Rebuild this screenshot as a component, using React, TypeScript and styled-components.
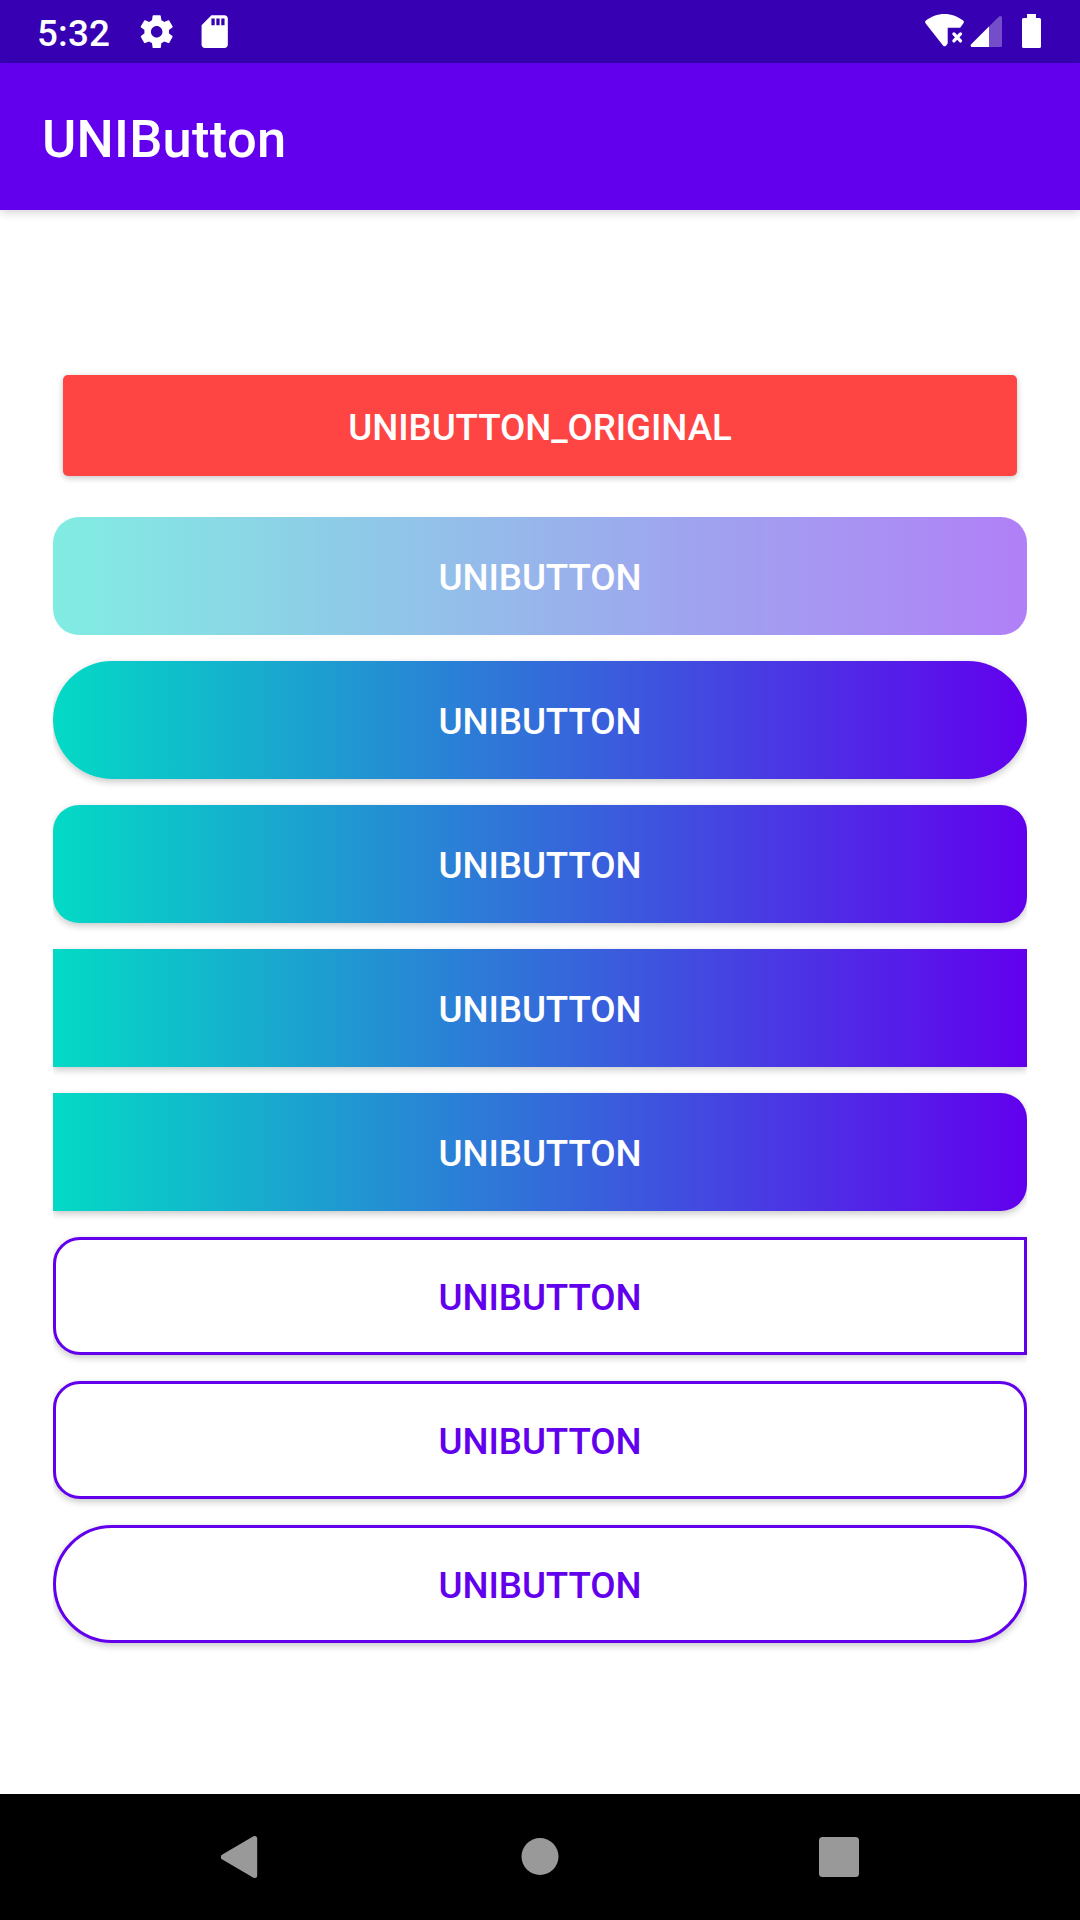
import React from "react";
import styled, { createGlobalStyle, css } from "styled-components";

const GlobalStyle = createGlobalStyle`
  *, *::before, *::after { box-sizing: border-box; }
  body { margin: 0; background: #fff; }
`;

const Screen = styled.div`
  display: flex;
  flex-direction: column;
  width: 1080px;
  height: 1920px;
  background: #fff;
  font-family: Roboto, "Noto Sans", sans-serif;
  overflow: hidden;
`;

const StatusBar = styled.header`
  display: flex;
  align-items: center;
  height: 63px;
  padding: 0 37px;
  background: #3700b3;
  color: #fff;
`;

const Clock = styled.time`
  width: 100px;
  padding-top: 3px;
  font-size: 36.75px;
  font-weight: 500;
  letter-spacing: 0.2px;
  line-height: 43px;
`;

const Notifications = styled.div`
  display: flex;
  flex: 1;
  gap: 18.6px;
`;

const SystemIcons = styled.div`
  display: flex;
  align-items: center;
`;

const AppBar = styled.div`
  display: flex;
  align-items: center;
  height: 147px;
  padding: 5px 42px 0;
  background: #6200ee;
  box-shadow: 0 3px 9px rgba(0, 0, 0, 0.14), 0 0 12px rgba(0, 0, 0, 0.04);
`;

const Title = styled.h1`
  margin: 0;
  color: #fff;
  font-size: 52.5px;
  font-weight: 500;
  letter-spacing: 0.25px;
  line-height: 62px;
`;

const Content = styled.main`
  display: flex;
  flex: 1;
  flex-direction: column;
  gap: 26px;
  padding: 165px 53px 0;
`;

const buttonText = css`
  border: 0;
  font-family: inherit;
  font-size: 36.75px;
  font-weight: 500;
  letter-spacing: -0.1px;
  line-height: 43px;
  text-align: center;
`;

const OriginalButton = styled.button`
  ${buttonText}
  height: 101px;
  margin: 0 10px 15px;
  padding: 4px 0 0;
  border-radius: 5px;
  background: #ff4444;
  color: #fff;
  box-shadow: 0 2px 6px rgba(0, 0, 0, 0.18), 0 1px 10px rgba(0, 0, 0, 0.06);
`;

const UniButton = styled.button<{ $radius: string; $outlined?: boolean }>`
  ${buttonText}
  height: 118px;
  padding: 2px 0 0;
  border-radius: ${(p) => p.$radius};
  background: linear-gradient(90deg, #03dac5, #6200ee);
  color: #fff;
  box-shadow: 0 3px 7px rgba(0, 0, 0, 0.17), 0 2px 10px rgba(0, 0, 0, 0.06);
  clip-path: inset(-20px 0);

  ${(p) =>
    p.$outlined &&
    css`
      border: 3px solid #6200ee;
      background: #fff;
      color: #6200ee;
    `}

  &:disabled {
    opacity: 0.5;
    box-shadow: none;
  }
`;

const NavBar = styled.nav`
  display: flex;
  justify-content: center;
  height: 126px;
  padding-right: 1px;
  background: #000;
`;

const NavButton = styled.button`
  display: flex;
  align-items: center;
  justify-content: center;
  width: 299px;
  padding: 0;
  border: 0;
  background: none;
`;

interface ButtonSpec {
  radius: string;
  outlined?: boolean;
  disabled?: boolean;
}

const buttons: ButtonSpec[] = [
  { radius: "26px", disabled: true },
  { radius: "59px" },
  { radius: "26px" },
  { radius: "0" },
  { radius: "0 26px 26px 0" },
  { radius: "27px 0 0 27px", outlined: true },
  { radius: "27px", outlined: true },
  { radius: "59px", outlined: true },
];

const GearIcon = () => (
  <svg width="39.4" height="39.4" viewBox="0 0 24 24" fill="#fff">
    <path d="M19.43 12.98c.04-.32.07-.64.07-.98s-.03-.66-.07-.98l2.11-1.65c.19-.15.24-.42.12-.64l-2-3.46c-.12-.22-.39-.3-.61-.22l-2.49 1c-.52-.4-1.08-.73-1.69-.98l-.38-2.65C14.46 2.18 14.25 2 14 2h-4c-.25 0-.46.18-.49.42l-.38 2.65c-.61.25-1.17.59-1.69.98l-2.49-1c-.23-.09-.49 0-.61.22l-2 3.46c-.13.22-.07.49.12.64l2.11 1.65c-.04.32-.07.65-.07.98s.03.66.07.98l-2.11 1.65c-.19.15-.24.42-.12.64l2 3.46c.12.22.39.3.61.22l2.49-1c.52.4 1.08.73 1.69.98l.38 2.65c.03.24.24.42.49.42h4c.25 0 .46-.18.49-.42l.38-2.65c.61-.25 1.17-.59 1.69-.98l2.49 1c.23.09.49 0 .61-.22l2-3.46c.12-.22.07-.49-.12-.64l-2.11-1.65zM12 15.5c-1.93 0-3.5-1.57-3.5-3.5s1.57-3.5 3.5-3.5 3.5 1.57 3.5 3.5-1.57 3.5-3.5 3.5z" />
  </svg>
);

const SdCardIcon = () => (
  <svg width="39.4" height="39.4" viewBox="0 0 24 24" fill="#fff">
    <path d="M18 2h-8L4.02 8 4 20c0 1.1.9 2 2 2h12c1.1 0 2-.9 2-2V4c0-1.1-.9-2-2-2zm-6 6h-2V4h2v4zm3 0h-2V4h2v4zm3 0h-2V4h2v4z" />
  </svg>
);

const WifiOffIcon = () => (
  <svg width="44" height="39" viewBox="0 0 44 39">
    <path
      d="M1.600 8.800C7 4.500 13.500 2 20.500 2S34 4.500 39.400 8.800Q40.400 9.800 39.600 11L36.200 15.800H23.700V31.500L22 33.700Q20.600 35 19.200 33.700L1.500 11.200Q.6 9.800 1.600 8.800Z"
      fill="#fff"
    />
    <path d="M29.900 21.900l6.600 7m0-7l-6.600 7" stroke="#fff" strokeWidth="3.300" strokeLinecap="round" />
  </svg>
);

const SignalIcon = () => (
  <svg width="36" height="39" viewBox="0 0 36 39">
    <path d="M3 32.500L31 4.500Q33 3.200 34 5.200V33.500Q34 35 32.500 35H4Q2 34.500 3 32.500Z" fill="#fff" fillOpacity=".3" />
    <path d="M21 14.500V35H4Q2 34.500 3 32.500Z" fill="#fff" />
  </svg>
);

const BatteryIcon = () => (
  <svg width="39" height="39" viewBox="0 0 39 39">
    <path d="M23 2h9v4h3.400q1.600 0 1.600 1.600v26.800q0 1.600-1.600 1.600H19.600q-1.600 0-1.600-1.600V7.600Q18 6 19.600 6H23Z" fill="#fff" />
  </svg>
);

const BackIcon = () => (
  <svg width="40" height="44" viewBox="0 0 40 44">
    <path d="M2.200 22L33.700 3.500V40.500Z" fill="#999" stroke="#999" strokeWidth="5" strokeLinejoin="round" />
  </svg>
);

const HomeIcon = () => (
  <svg width="38" height="38" viewBox="0 0 38 38">
    <circle cx="19" cy="18.500" r="18.500" fill="#999" />
  </svg>
);

const RecentsIcon = () => (
  <svg width="40" height="40" viewBox="0 0 40 40">
    <rect width="40" height="40" rx="3.500" fill="#999" />
  </svg>
);

export default function App() {
  return (
    <Screen>
      <GlobalStyle />
      <StatusBar>
        <Clock>5:32</Clock>
        <Notifications>
          <GearIcon />
          <SdCardIcon />
        </Notifications>
        <SystemIcons>
          <WifiOffIcon />
          <SignalIcon />
          <BatteryIcon />
        </SystemIcons>
      </StatusBar>
      <AppBar>
        <Title>UNIButton</Title>
      </AppBar>
      <Content>
        <OriginalButton>UNIBUTTON_ORIGINAL</OriginalButton>
        {buttons.map((b, i) => (
          <UniButton key={i} $radius={b.radius} $outlined={b.outlined} disabled={b.disabled}>
            UNIBUTTON
          </UniButton>
        ))}
      </Content>
      <NavBar>
        <NavButton aria-label="Back"><BackIcon /></NavButton>
        <NavButton aria-label="Home"><HomeIcon /></NavButton>
        <NavButton aria-label="Recents"><RecentsIcon /></NavButton>
      </NavBar>
    </Screen>
  );
}
